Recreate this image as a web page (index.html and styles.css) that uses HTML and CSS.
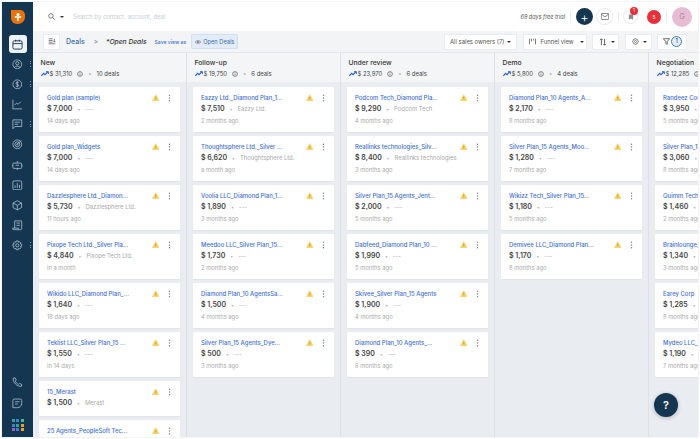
FILE: index.html
```html
<!DOCTYPE html>
<html lang="en">
<head>
<meta charset="UTF-8">
<title>Deals</title>
<link rel="stylesheet" href="styles.css">
</head>
<body>
<svg class="defs" width="0" height="0">
  <symbol id="warn" viewBox="0 0 12 12"><path d="M6 1.2 11.4 10.8H.6Z" fill="#f9d060" stroke="#f9d060" stroke-linejoin="round"/><path d="M6 4.500v3M6 8.800v.6" stroke="#9a7a20" stroke-width="1"/></symbol>
  <symbol id="dots" viewBox="0 0 4 12"><circle cx="2" cy="2" r="1.100" fill="#808080"/><circle cx="2" cy="6" r="1.100" fill="#808080"/><circle cx="2" cy="10" r="1.100" fill="#808080"/></symbol>
  <symbol id="trend" viewBox="0 0 12 8"><path d="M.5 7 4 3.500l2 2L10.500 1" fill="none" stroke="#2f62d8" stroke-width="1.800"/><path d="M7.500.8h3.700v3.700" fill="none" stroke="#2f62d8" stroke-width="1.300"/></symbol>
  <symbol id="info" viewBox="0 0 10 10"><circle cx="5" cy="5" r="4" fill="none" stroke="#444" stroke-width="1"/><path d="M5 4.400v3M5 2.500v1" stroke="#444" stroke-width="1"/></symbol>
</svg>
<div class="app">
  <nav class="sidebar">
    <svg class="logo" viewBox="0 0 16 16" width="16" height="16"><path d="M1 1h9a5 5 0 0 1 5 5v2a7 7 0 0 1-7 7H7a6 6 0 0 1-6-6Z" fill="#e8730c"/><circle cx="8" cy="5.500" r="1.600" fill="#fff"/><path d="M4.800 8h6.400M8 8v4" stroke="#fff" stroke-width="1.500"/></svg>
    <div class="nav-active"><svg viewBox="0 0 12 12" width="11" height="11" fill="none" stroke="#143650"><rect x="1" y="2" width="10" height="9" rx="1.500"/><path d="M1 5h10M4 .8v2M8 .8v2"/></svg></div>
    <div class="nav-list">
      <div class="nav-item"><svg viewBox="0 0 12 12"><circle cx="6" cy="6" r="5"/><circle cx="6" cy="4.800" r="1.800"/><path d="M2.800 9.600c1-2 5.400-2 6.400 0"/></svg><i class="grip"></i></div>
      <div class="nav-item"><svg viewBox="0 0 12 12"><circle cx="6" cy="6" r="5"/><path d="M7.600 4.200C7 3.300 4.500 3.300 4.500 4.800S7.600 5.900 7.600 7.300 5 8.800 4.300 7.800M6 2.600v6.800"/></svg><i class="grip"></i></div>
      <div class="nav-item"><svg viewBox="0 0 12 12"><path d="M1 .8v10.400h10.400M2.800 7l2.400-2.400 1.800 1.400L10 3"/></svg></div>
      <div class="nav-item"><svg viewBox="0 0 12 12"><path d="M1 1h10v7.500H3.500L1 11ZM3 3.600h6M3 6h4"/></svg><i class="grip"></i></div>
      <div class="nav-item"><svg viewBox="0 0 12 12"><circle cx="6" cy="6" r="5"/><circle cx="6" cy="6" r="2.800"/><circle cx="6" cy="6" r=".8"/><path d="M6 6l4.500-4.500"/></svg></div>
      <div class="nav-item"><svg viewBox="0 0 12 12"><rect x="1" y="3.500" width="10" height="6" rx="1"/><path d="M6 3.500V1M4 6h4M6 9.500v2M0 6.500h1M11 6.500h1"/></svg></div>
      <div class="nav-item"><svg viewBox="0 0 12 12"><rect x="1" y="1" width="10" height="10" rx="1.500"/><path d="M3.500 9V6M6 9V3.500M8.500 9V5.500"/></svg></div>
      <div class="nav-item"><svg viewBox="0 0 12 12"><path d="M6 .8l4.800 2.600v5.200L6 11.200 1.200 8.600V3.400ZM1.200 3.400 6 6l4.800-2.600M6 6v5.200"/></svg></div>
      <div class="nav-item"><svg viewBox="0 0 12 12"><path d="M3 1h8v8.500a1.500 1.500 0 0 1-1.500 1.500H1.500A1.500 1.500 0 0 1 .8 9.200H7.500V10.500M3 1v8M5 3.500h4M5 6h4"/></svg></div>
      <div class="nav-item"><svg viewBox="0 0 12 12"><circle cx="6" cy="6" r="1.800"/><path d="M5 1h2l.4 1.500 1.400-.6 1.400 1.400-.7 1.300 1.500.4v2l-1.500.4.700 1.300-1.400 1.400-1.400-.6L7 11H5l-.4-1.500-1.400.6-1.400-1.400.7-1.300L1 7V5l1.500-.4-.7-1.300 1.400-1.400 1.400.6Z"/></svg><i class="grip"></i></div>
    </div>
    <div class="nav-bottom">
      <div class="nav-item"><svg viewBox="0 0 12 12"><path d="M1.500 1.200 3.600 1l1.200 2.400-1.100 1.300c.6 1.400 1.900 2.800 3.500 3.600l1.300-1.100L11 8.400l-.2 2.100C6 11.400.6 6 1.500 1.200Z"/></svg></div>
      <div class="nav-item"><svg viewBox="0 0 12 12"><path d="M2.500 1.200h7A1.500 1.500 0 0 1 11 2.700V6a5 5 0 0 1-5 5H1V2.700a1.500 1.500 0 0 1 1.500-1.500ZM3.500 4.300h5M3.500 6.800h3"/></svg></div>
      <div class="apps">
        <i class="c1"></i><i class="c2"></i><i class="c3"></i>
        <i class="c2"></i><i class="c1"></i><i class="c4"></i>
        <i class="c5"></i><i class="c2"></i><i class="c4"></i>
      </div>
    </div>
  </nav>

  <div class="content">
    <header class="topbar">
      <svg class="search-icon" viewBox="0 0 10 10" width="7" height="7" fill="none" stroke="#444"><circle cx="4.200" cy="4.200" r="3.200"/><path d="M6.600 6.600 9.500 9.500"/></svg>
      <span class="caret"></span>
      <span class="search-text">Search by contact, account, deal</span>
      <span class="trial">69 days free trial</span>
      <span class="vline"></span>
      <button class="round add">+</button>
      <button class="round ghost"><svg viewBox="0 0 12 10" width="8" height="7" fill="none" stroke="#555"><rect x=".5" y=".5" width="11" height="9" rx="1"/><path d="M.5 1.500 6 5.500l5.500-4"/></svg></button>
      <span class="vline"></span>
      <button class="round ghost bell"><svg viewBox="0 0 10 10" width="6" height="6" fill="#888"><path d="M1.500 1h7v8.500L5 7.500 1.500 9.500Z"/></svg><span class="badge">1</span></button>
      <button class="round red">5</button>
      <span class="vline"></span>
      <span class="avatar">G</span>
    </header>

    <div class="subbar">
      <button class="tool square"><svg viewBox="0 0 12 10" width="8" height="7" fill="none" stroke="#444"><path d="M1 1h6M1 3.500h6M1 6h6M1 8.500h10M9.500 1v5M8 4.500 9.500 6 11 4.500"/></svg></button>
      <span class="crumb">Deals</span>
      <span class="crumb-sep">&gt;</span>
      <span class="view-name">*Open Deals</span>
      <span class="save-as">Save view as</span>
      <span class="view-chip"><svg viewBox="0 0 12 8" width="6" height="4" fill="none" stroke="#444"><path d="M.5 4C3 .5 9 .5 11.500 4 9 7.500 3 7.500.5 4Z"/><circle cx="6" cy="4" r="1.500"/></svg>Open Deals</span>
      <div class="sub-right">
        <button class="tool owners">All sales owners (7)<span class="caret"></span></button>
        <button class="tool funnel"><svg viewBox="0 0 10 10" width="7" height="7" fill="none" stroke="#444"><path d="M.7 1v8M9.300 1v8M3.500 1v4M6.500 1v2.500"/></svg>Funnel view<span class="caret"></span></button>
        <button class="tool sort"><svg viewBox="0 0 10 10" width="8" height="8" fill="none" stroke="#444"><path d="M3 9V1M1.300 2.700 3 1l1.700 1.700M7 1v8M5.300 7.300 7 9l1.700-1.700"/></svg><span class="caret"></span></button>
        <button class="tool gear"><svg viewBox="0 0 12 12" width="7" height="7" fill="none" stroke="#555"><circle cx="6" cy="6" r="1.800"/><path d="M5 1h2l.4 1.500 1.400-.6 1.400 1.400-.7 1.300 1.500.4v2l-1.500.4.700 1.300-1.400 1.400-1.400-.6L7 11H5l-.4-1.500-1.400.6-1.400-1.400.7-1.300L1 7V5l1.500-.4-.7-1.300 1.400-1.400 1.400.6Z"/></svg><span class="caret"></span></button>
        <button class="tool filter"><svg viewBox="0 0 10 10" width="7" height="7" fill="none" stroke="#333"><path d="M.5 1h9L6 5.300V9L4 8V5.300Z"/></svg><span class="count">1</span></button>
      </div>
    </div>

    <main class="board" id="board"></main>
    <button class="help">?</button>
  </div>
</div>
<script src="board.js"></script>
</body>
</html>
```

FILE: styles.css
```css
* { margin: 0; padding: 0; box-sizing: border-box; }
html, body { height: 100%; overflow: hidden; }
body {
    background: #fff;
    padding: 2px;
    font-family: Inter, "Liberation Sans", sans-serif;
    color: #333;
}
button { font-family: inherit; border: 0; background: none; color: inherit; }
.defs { position: absolute; }

.app {
    display: flex;
    width: 696px;
    height: 435px;
    overflow: hidden;
    box-shadow: 0 0 1px #bbb;
}

/* left nav */
.sidebar {
    width: 31px;
    flex: none;
    background: #143650;
    display: flex;
    flex-direction: column;
    align-items: center;
    padding-top: 7px;
}
.nav-active {
    width: 18px;
    height: 18px;
    margin-top: 10px;
    background: #eef3f8;
    border-radius: 3px;
    display: flex;
    align-items: center;
    justify-content: center;
}
.nav-list { display: flex; flex-direction: column; gap: 9.600px; margin-top: 5.700px; }
.nav-item { position: relative; width: 18px; height: 10.600px; display: flex; justify-content: center; }
.nav-item svg { width: 10.600px; height: 10.600px; fill: none; stroke: #c6d3de; stroke-width: .8; }
.grip {
    position: absolute;
    right: -4px;
    top: 2px;
    width: 1px;
    height: 6px;
    background: repeating-linear-gradient(#7f97a9 0 1px, transparent 1px 2.5px);
}
.nav-bottom { margin-top: auto; display: flex; flex-direction: column; align-items: center; gap: 10.400px; padding-bottom: 6px; }
.apps { display: grid; grid-template-columns: repeat(3, 3px); gap: 1.500px; }
.apps i { width: 3px; height: 3px; }
.c1 { background: #2aa79b; }
.c2 { background: #3f7fd0; }
.c3 { background: #3fbf8f; }
.c4 { background: #f0a020; }
.c5 { background: #a060c0; }

.content { flex: 1; min-width: 0; display: flex; flex-direction: column; position: relative; }

/* top bar */
.topbar {
    height: 29px;
    flex: none;
    display: flex;
    align-items: center;
    background: #fff;
    padding: 0 5px 0 15px;
}
.search-icon { margin-right: 5px; }
.caret {
    display: inline-block;
    width: 0;
    height: 0;
    border: 2px solid transparent;
    border-top: 2.500px solid #333;
    border-bottom: 0;
}
.search-text { margin-left: 9px; font-size: 5.950px; color: #c9ced4; }
.trial { margin-left: auto; font-size: 5.500px; font-style: italic; color: #555; }
.vline { width: 1px; height: 10px; background: #e8eaed; margin: 0 5px; }
.round {
    width: 17px;
    height: 17px;
    border-radius: 50%;
    display: flex;
    align-items: center;
    justify-content: center;
    flex: none;
}
.add { background: #143650; color: #fff; font-size: 13px; font-weight: 300; margin-right: 3px; }
.ghost { border: 1px solid #e6e8eb; }
.bell { position: relative; margin: 0 9px 0 -1px; width: 15px; height: 15px; }
.badge {
    position: absolute;
    top: -3px;
    right: -1px;
    width: 8px;
    height: 8px;
    border-radius: 50%;
    background: #e8303a;
    color: #fff;
    font-size: 4.500px;
    line-height: 8px;
    text-align: center;
}
.red { width: 14px; height: 14px; background: #e8303a; color: #fff; font-size: 5px; }
.avatar {
    width: 20px;
    height: 20px;
    border-radius: 50%;
    background: #e8bcd4;
    color: #a98a9c;
    font-size: 7.500px;
    display: flex;
    align-items: center;
    justify-content: center;
    margin-right: 1px;
}

/* sub bar */
.subbar {
    height: 22px;
    flex: none;
    background: #f2f4f6;
    border-bottom: 1px solid #e3e6ea;
    display: flex;
    align-items: center;
    padding-left: 10px;
}
.tool {
    height: 16px;
    background: #fff;
    border: 1px solid #e9ebee;
    border-radius: 1px;
    display: flex;
    align-items: center;
    gap: 4px;
    font-size: 5.900px;
    color: #555;
    flex: none;
}
.square { width: 17px; justify-content: center; }
.crumb { margin-left: 6px; font-size: 7px; font-weight: 500; color: #3f6fa8; }
.crumb-sep { margin-left: 9px; font-size: 6.500px; color: #777; }
.view-name { margin-left: 8px; font-size: 6.700px; font-style: italic; font-weight: 500; color: #333; }
.save-as { margin-left: 8px; font-size: 5.100px; font-weight: 500; color: #3f6fd0; }
.view-chip {
    margin-left: 5px;
    height: 15px;
    padding: 0 3px;
    display: flex;
    align-items: center;
    gap: 2px;
    background: #e1ecf8;
    border: 1px solid #cfe0f2;
    border-radius: 2px;
    font-size: 5.700px;
    color: #3f6fa8;
}
.sub-right { margin-left: auto; display: flex; gap: 5.500px; padding-right: 11px; }
.owners { width: 73px; padding-left: 5px; gap: 3px; }
.funnel { width: 64px; padding-left: 5px; gap: 5px; }
.funnel .caret { margin-left: 1px; }
.sort { width: 27px; padding-left: 6px; }
.gear { width: 27px; padding-left: 6px; }
.filter { width: 30px; padding-left: 5px; gap: 1px; }
.count {
    width: 11px;
    height: 11px;
    border-radius: 50%;
    border: 1px solid #3f7fb8;
    background: #e1ecf8;
    color: #143650;
    font-size: 5.500px;
    line-height: 9px;
    text-align: center;
}

/* deal columns */
.board { flex: 1; display: flex; overflow: hidden; background: #e9edf2; }
.column { width: 154px; flex: none; border-right: 1px solid #dde1e6; }
.col-head {
    height: 29px;
    background: #f3f5f7;
    padding: 5px 0 0 7.500px;
}
.col-title { font-size: 6.800px; font-weight: 500; color: #333; white-space: nowrap; line-height: 9px; }
.col-stats {
    display: flex;
    align-items: center;
    margin-top: 3px;
    font-size: 5.900px;
    color: #444;
    white-space: nowrap;
    line-height: 8px;
}
.col-stats .trend { width: 8px; height: 5.500px; margin-right: 1px; }
.col-stats .info { width: 6px; height: 6px; margin-left: 5px; }
.col-stats .sep { margin: 0 5px; color: #aaa; }
.col-cards { display: flex; flex-direction: column; gap: 4px; padding: 5px 0 0 6px; }
.card {
    width: 141px;
    height: 45px;
    background: #fff;
    border-radius: 1px;
    padding: 5.500px 9px 0 8px;
    flex: none;
    box-shadow: 0 1px 1px rgba(0, 0, 0, .04);
}
.card.short { height: 35px; }
.card-top { display: flex; align-items: center; height: 10px; }
.card-name {
    font-size: 5.950px;
    font-weight: 500;
    color: #3f6fd0;
    white-space: nowrap;
}
.card-top .warn { margin-left: auto; width: 7.500px; height: 7.500px; flex: none; }
.card-top .dots { margin-left: 9px; width: 3px; height: 8px; flex: none; }
.card-amount { display: flex; align-items: center; margin-top: 1px; height: 10px; white-space: nowrap; }
.amount { font-size: 7px; font-weight: 600; color: #444; }
.card-amount .sep { margin: 0 5px; font-size: 5px; color: #aaa; }
.org { font-size: 5.900px; color: #aaa; }
.card-date { margin-top: 2px; font-size: 5.800px; line-height: 9px; color: #aaa; }

.help {
    position: absolute;
    right: 20px;
    bottom: 20px;
    width: 24px;
    height: 24px;
    border-radius: 50%;
    background: #143650;
    color: #fff;
    font-size: 11px;
    font-weight: 600;
    box-shadow: 0 1px 4px rgba(0, 0, 0, .25);
}
```

FILE: board.js
```js
var columns = [
  { title: "New", total: "$ 31,310", deals: "10 deals", cards: [
    ["Gold plan (sample)", "$ 7,000", "---", "14 days ago"],
    ["Gold plan_Widgets", "$ 7,000", "---", "14 days ago"],
    ["Dazzlesphere Ltd._Diamon...", "$ 5,730", "Dazzlesphere Ltd.", "11 hours ago"],
    ["Pixope Tech Ltd._Silver Pla...", "$ 4,840", "Pixope Tech Ltd.", "in a month"],
    ["Wikido LLC_Diamond Plan_...", "$ 1,640", "---", "18 days ago"],
    ["Teklist LLC_Silver Plan_15 ...", "$ 1,550", "---", "in 14 days"],
    ["15_Merast", "$ 1,500", "Merast", ""],
    ["25 Agents_PeopleSoft Tec...", "", "", ""]
  ]},
  { title: "Follow-up", total: "$ 19,750", deals: "6 deals", cards: [
    ["Eazzy Ltd._Diamond Plan_1...", "$ 7,510", "Eazzy Ltd.", "2 months ago"],
    ["Thoughtsphere Ltd._Silver ...", "$ 6,620", "Thoughtsphere Ltd.", "a month ago"],
    ["Voolia LLC_Diamond Plan_1...", "$ 1,890", "---", "3 months ago"],
    ["Meedoo LLC_Silver Plan_15...", "$ 1,730", "---", "2 months ago"],
    ["Diamond Plan_10 AgentsSa...", "$ 1,500", "---", "4 months ago"],
    ["Silver Plan_15 Agents_Dye...", "$ 500", "---", "3 months ago"]
  ]},
  { title: "Under review", total: "$ 23,970", deals: "6 deals", cards: [
    ["Podcom Tech_Diamond Pla...", "$ 9,290", "Podcom Tech", "4 months ago"],
    ["Reallinks technologies_Silv...", "$ 8,400", "Reallinks technologies", "3 months ago"],
    ["Silver Plan_15 Agents_Jent...", "$ 2,000", "---", "5 months ago"],
    ["Dabfeed_Diamond Plan_10 ...", "$ 1,990", "---", "5 months ago"],
    ["Skivee_Silver Plan_15 Agents", "$ 1,900", "---", "4 months ago"],
    ["Diamond Plan_10 Agents_...", "$ 390", "---", "6 months ago"]
  ]},
  { title: "Demo", total: "$ 5,800", deals: "4 deals", cards: [
    ["Diamond Plan_10 Agents_A...", "$ 2,170", "---", "8 months ago"],
    ["Silver Plan_15 Agents_Moo...", "$ 1,280", "---", "7 months ago"],
    ["Wikizz Tech_Silver Plan_15...", "$ 1,180", "---", "5 months ago"],
    ["Demivee LLC_Diamond Plan...", "$ 1,170", "---", "8 months ago"]
  ]},
  { title: "Negotiation", total: "$ 12,285", deals: "6 deals", cards: [
    ["Randeez Corp_Diamond...", "$ 3,950", "---", "5 months ago"],
    ["Silver Plan_15 Agents...", "$ 3,060", "---", "8 months ago"],
    ["Quimm Tech_Silver...", "$ 1,460", "---", "2 months ago"],
    ["Brainlounge_Diamond...", "$ 1,340", "---", "3 months ago"],
    ["Earey Corp", "$ 1,285", "---", "8 months ago"],
    ["Mydeo LLC_Silver Plan", "$ 1,190", "---", "7 months ago"]
  ]}
];

function use(name) {
  return '<svg class="' + name + '"><use href="#' + name + '"/></svg>';
}

var html = "";
columns.forEach(function (col) {
  html += '<section class="column"><div class="col-head"><div class="col-title">' + col.title + '</div>';
  html += '<div class="col-stats">' + use("trend") + col.total + use("info") + '<span class="sep">•</span>' + col.deals + '</div></div>';
  html += '<div class="col-cards">';
  col.cards.forEach(function (c) {
    html += '<article class="card' + (c[3] ? "" : " short") + '"><div class="card-top"><span class="card-name">' + c[0] + '</span>' + use("warn") + use("dots") + '</div>';
    if (c[1]) {
      html += '<div class="card-amount"><span class="amount">' + c[1] + '</span><span class="sep">•</span><span class="org">' + c[2] + '</span></div>';
    }
    if (c[3]) {
      html += '<div class="card-date">' + c[3] + '</div>';
    }
    html += '</article>';
  });
  html += '</div></section>';
});
document.getElementById("board").innerHTML = html;
```
